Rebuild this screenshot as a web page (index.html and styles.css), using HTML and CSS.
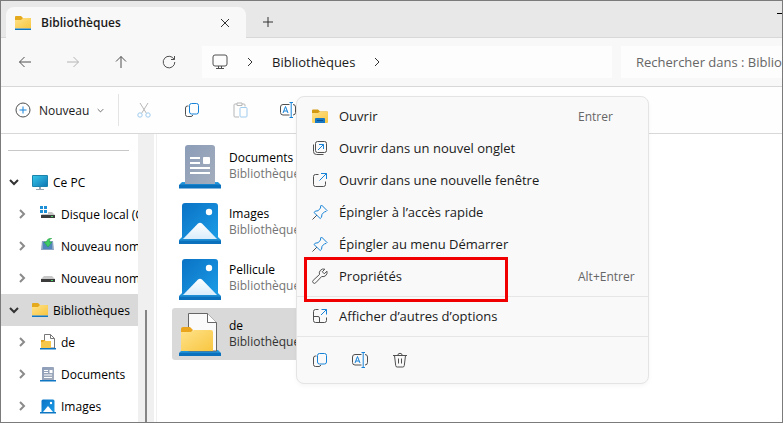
FILE: index.html
```html
<!DOCTYPE html>
<html lang="fr">
<head>
  <meta charset="UTF-8">
  <meta name="viewport" content="width=device-width, initial-scale=1.0">
  <title>Bibliothèques</title>
  <link rel="stylesheet" href="styles.css">
</head>
<body>
  <!-- icons -->
  <svg class="sprite" aria-hidden="true">
    <defs>
      <linearGradient id="gFolder" x1="0" y1="0" x2="1" y2="1">
        <stop offset="0" stop-color="#ffe28a"/><stop offset="1" stop-color="#f8c640"/>
      </linearGradient>
      <linearGradient id="gBlue" x1="0" y1="0" x2="1" y2="1">
        <stop offset="0" stop-color="#0a72c4"/><stop offset="1" stop-color="#1c9ce6"/>
      </linearGradient>
      <linearGradient id="gDoc" x1="0" y1="0" x2="1" y2="1">
        <stop offset="0" stop-color="#8c9db8"/><stop offset="1" stop-color="#a3adbd"/>
      </linearGradient>
      <linearGradient id="gBase" x1="0" y1="0" x2="0" y2="1">
        <stop offset="0" stop-color="#2da5e6"/><stop offset="1" stop-color="#0566b4"/>
      </linearGradient>
      <linearGradient id="gSnow" x1="0" y1="0" x2="0" y2="1">
        <stop offset="0" stop-color="#ffffff"/><stop offset="1" stop-color="#d9edfb"/>
      </linearGradient>
      <linearGradient id="gScreen" x1="0" y1="0" x2="1" y2="1">
        <stop offset="0" stop-color="#35c5e8"/><stop offset="1" stop-color="#1179b5"/>
      </linearGradient>
    </defs>
    <symbol id="folder" viewBox="0 0 16 16">
      <path d="M0 2a1 1 0 0 1 1-1h5l2 2h7a1 1 0 0 1 1 1v9H0z" fill="#e5a91d"/>
      <path d="M0 5h6l2-2h7a1 1 0 0 1 1 1v9.500H0z" fill="url(#gFolder)"/>
      <path d="M0 13.500h16V15H0z" fill="#0f76c4"/>
    </symbol>
    <symbol id="folderOpen" viewBox="0 0 16 16">
      <path d="M0 2.500a1 1 0 0 1 1-1h5l2 2h7a1 1 0 0 1 1 1V14H0z" fill="#d39a12"/>
      <path d="M0 5h6l2-1.500h7a1 1 0 0 1 1 1V14a1 1 0 0 1-1 1H1a1 1 0 0 1-1-1z" fill="url(#gFolder)"/>
      <path d="M3 15v-4a1 1 0 0 1 1-1h8a1 1 0 0 1 1 1v4z" fill="#1677c2"/>
      <path d="M5 12.500h6" stroke="#0b4f8f" stroke-width="1"/>
    </symbol>
    <symbol id="docSmall" viewBox="0 0 16 16">
      <path d="M2 14V2a1 1 0 0 1 1-1h10a1 1 0 0 1 1 1v12z" fill="url(#gDoc)"/>
      <path d="M4 4.500h4M4 6.500h4M4 9h8M4 11.500h8" stroke="#fff"/>
      <path d="M9.500 4h3v3h-3z" fill="#fff"/>
      <path d="M0 14h16v1.500H0z" fill="#0f76c4"/>
    </symbol>
    <symbol id="imgSmall" viewBox="0 0 16 16">
      <path d="M1.500 14V3a1.500 1.500 0 0 1 1.500-1.500h10A1.500 1.500 0 0 1 14.500 3v11z" fill="url(#gBlue)"/>
      <path d="M3 14l5-6 5 6z" fill="#fff"/><circle cx="11" cy="5" r="1.200" fill="#fff"/>
      <path d="M0 14h16v1.500H0z" fill="#0f76c4"/>
    </symbol>
    <symbol id="libSmall" viewBox="0 0 16 16">
      <path d="M4.500 14V.500h6l4 4V14z" fill="#fff" stroke="#777"/>
      <path d="M10.500.500v4h4" fill="none" stroke="#777"/>
      <path d="M1 6h3.500l1 1H11v7H1z" fill="#f7c74c"/><path d="M1 6h3.500l1 1H4L3 8H1z" fill="#e5a11a"/>
      <path d="M0 14h16v1.500H0z" fill="#0f76c4"/>
    </symbol>
    <symbol id="docBig" viewBox="0 0 42 45">
      <path d="M3 38h36l3 3v2H0v-2z" fill="url(#gBase)"/>
      <path d="M6 40V4a3 3 0 0 1 3-3h24a3 3 0 0 1 3 3v36z" fill="url(#gDoc)"/>
      <path d="M11 14h10M11 19h10M11 24h20M11 29h20" stroke="#fff" stroke-width="2"/>
      <rect x="24" y="13" width="7" height="7" rx="1" fill="#fff"/>
      <path d="M0 41h42v3.500H0z" fill="#0c71bd"/>
    </symbol>
    <symbol id="imgBig" viewBox="0 0 42 45">
      <path d="M3 37h36l3 3v4H0v-4z" fill="url(#gBase)"/>
      <path d="M3 38V6a3 3 0 0 1 3-3h30a3 3 0 0 1 3 3v32z" fill="url(#gBlue)"/>
      <path d="M4 39l15-15.500q2-1.500 4 0L38 39z" fill="url(#gSnow)"/>
      <circle cx="30" cy="12" r="3.200" fill="#fff"/>
      <path d="M0 41h42v3H0z" fill="#0c71bd"/>
    </symbol>
    <symbol id="libBig" viewBox="0 0 42 45">
      <path d="M3 38h36l3 3v3H0v-3z" fill="url(#gBase)"/>
      <path d="M9.500 39V1.500h19l9 9V39z" fill="#fafafa" stroke="#666"/>
      <path d="M28.500 1.500v9h9" fill="#fff" stroke="#666"/>
      <path d="M2 17a2 2 0 0 1 2-2h7l3 3-3 4H2z" fill="#eba51d"/>
      <path d="M2 20h10l3-2h17a2 2 0 0 1 2 2v19H2z" fill="url(#gFolder)"/>
      <path d="M0 41h42v3H0z" fill="#0c71bd"/>
    </symbol>
    <symbol id="pc" viewBox="0 0 16 16">
      <rect x="0" y="1" width="16" height="12" rx="1" fill="#1b84ad"/>
      <rect x="1" y="2" width="14" height="10" fill="url(#gScreen)"/>
      <path d="M7 13h2v2h3v1H4v-1h3z" fill="#9aa7b2"/>
    </symbol>
    <symbol id="diskWin" viewBox="0 0 16 16">
      <path d="M0 0h3v3H0zM4 0h3v3H4zM0 4h3v3H0zM4 4h3v3H4z" fill="#1e8fd5"/>
      <path d="M8 6h4l3 3H1l1-1h6z" fill="#c4c4c4"/><path d="M1 9h14v3H1z" fill="#3b3b3b"/><path d="M11 10.500h2" stroke="#4ed86c"/>
    </symbol>
    <symbol id="diskNew" viewBox="0 0 16 16">
      <path d="M2 3h11l1 9H1z" fill="#8ba4c3"/><path d="M3 4h9v7H3z" fill="#5186bd"/>
      <path d="M12 0C9 0 7 1 6.500 4H4l4 5 4-5h-2.500c0-2 .500-3 2.500-4z" fill="#41cc63" stroke="#229a43" stroke-width=".5"/>
    </symbol>
    <symbol id="disk" viewBox="0 0 16 16">
      <path d="M4 6h8l3 3H1z" fill="#c8c8c8"/><path d="M1 9h14v3H1z" fill="#3b3b3b"/><path d="M11 10.500h2" stroke="#4ed86c"/>
    </symbol>
    <symbol id="left" viewBox="0 0 16 16"><path d="M14 8H2.500M7.500 3L2.500 8l5 5"/></symbol>
    <symbol id="right" viewBox="0 0 16 16"><path d="M2 8h11.500M8.500 3l5 5-5 5"/></symbol>
    <symbol id="up" viewBox="0 0 16 16"><path d="M8 14V2.500M3 7.500l5-5 5 5"/></symbol>
    <symbol id="refresh" viewBox="0 0 16 16"><path d="M13.200 5.500A5.800 5.800 0 1 0 13.800 8M13.500 2v3.500H10"/></symbol>
    <symbol id="monitor" viewBox="0 0 16 16"><rect x="1" y="1" width="14" height="11" rx="2"/><path d="M6.500 12v2.500M9.500 12v2.500M4 14.500h8"/></symbol>
    <symbol id="chevR" viewBox="0 0 10 10"><path d="M3 1l4 4-4 4"/></symbol>
    <symbol id="chevD" viewBox="0 0 10 10"><path d="M1 3l4 4 4-4"/></symbol>
    <symbol id="close" viewBox="0 0 10 10"><path d="M1 1l8 8M9 1L1 9"/></symbol>
    <symbol id="plus" viewBox="0 0 10 10"><path d="M5 0v10M0 5h10"/></symbol>
    <symbol id="new" viewBox="0 0 16 16"><circle cx="8" cy="8" r="7"/><path class="accent" d="M8 4.500v7M4.500 8h7"/></symbol>
    <symbol id="cut" viewBox="0 0 16 16"><path d="M4 1l6.500 10.500M12 1L5.500 11.500"/><g class="accent"><circle cx="4" cy="13" r="2.200"/><circle cx="12" cy="13" r="2.200"/></g></symbol>
    <symbol id="copy" viewBox="0 0 16 16"><path d="M4.500 4H3.500a2 2 0 0 0-2 2v6.500a2 2 0 0 0 2 2H7a2 2 0 0 0 1.800-1.500"/><rect class="accent" x="5.500" y="1.500" width="9" height="10.500" rx="2"/></symbol>
    <symbol id="paste" viewBox="0 0 16 16"><path d="M7 15H3a1 1 0 0 1-1-1V3a1 1 0 0 1 1-1h2M10 2h2a1 1 0 0 1 1 1v1.500M5 1h5v2.500H5z"/><rect class="accent" x="8" y="5.500" width="7" height="9.500" rx="1"/></symbol>
    <symbol id="rename" viewBox="0 0 16 16"><path d="M9.500 2.500H3a2.500 2.500 0 0 0-2.500 2.500v5.500A2.500 2.500 0 0 0 3 13h6.500M13 2.500a2.500 2.500 0 0 1 2.500 2.500v5.500A2.500 2.500 0 0 1 13 13"/><path class="accent" d="M3 11l2.500-6.500L8 11M4 9h3M11.200.500v15M9.500.500h3.500M9.500 15.500h3.500"/></symbol>
    <symbol id="newTab" viewBox="0 0 16 16"><rect x="3.500" y="1.500" width="11" height="11" rx="2"/><path d="M1.500 4.500v7a3 3 0 0 0 3 3h7"/><path class="accent" d="M6 10l5.500-5.500M7 4.500h4.500V9"/></symbol>
    <symbol id="newWin" viewBox="0 0 16 16"><path d="M6.500 2.500h-3a2 2 0 0 0-2 2v8a2 2 0 0 0 2 2h8a2 2 0 0 0 2-2v-3"/><path class="accent" d="M7.500 8.500l7-7M9 1.500h5.500V7"/></symbol>
    <symbol id="pin" viewBox="0 0 16 16"><path d="M5 11L.500 15.500"/><path class="accent" d="M9.500 1l5.500 5.500-1 1-1.500.300-2.500 2.500-.500 3-1.300 1.200L2 8.500l1.200-1.300 3-.500L8.500 4l.200-2z"/></symbol>
    <symbol id="wrench" viewBox="0 0 16 16"><path d="M12.800 1.200a4.200 4.200 0 0 0-5.300 5.300L1.200 12.300a1.600 1.600 0 0 0 2.500 2.500l6-6.300a4.200 4.200 0 0 0 5.200-5.300L12.300 5.800l-2-2z"/></symbol>
    <symbol id="more" viewBox="0 0 16 16"><path d="M6.500 1.500h-3a2 2 0 0 0-2 2v9a2 2 0 0 0 2 2h9a2 2 0 0 0 2-2v-3M1.500 8.500H6a1.500 1.500 0 0 1 1.500 1.500v4.500"/><path class="accent" d="M9 7l5.500-5.500M9.500 1.500h5V6.500"/></symbol>
    <symbol id="trash" viewBox="0 0 16 16"><path d="M1 3.500h14M5.800 3.500a2.200 2.200 0 0 1 4.400 0M2.500 3.500l1.200 10a1.500 1.500 0 0 0 1.500 1.500h5.600a1.500 1.500 0 0 0 1.500-1.500l1.200-10M6.500 6.500v5M9.500 6.500v5"/></symbol>
  </svg>

  <div class="window">
    <header class="titleBar">
      <div class="tab">
        <svg class="icon color"><use href="#folder"/></svg>
        <span class="tabTitle">Bibliothèques</span>
        <button class="tabClose" aria-label="Fermer l'onglet"><svg class="glyph"><use href="#close"/></svg></button>
      </div>
      <button class="tabNew" aria-label="Nouvel onglet"><svg class="glyph"><use href="#plus"/></svg></button>
      <button class="minimize" aria-label="Réduire"></button>
    </header>

    <nav class="navBar">
      <div class="navButtons">
        <button aria-label="Précédent"><svg class="icon"><use href="#left"/></svg></button>
        <button aria-label="Suivant" class="off" disabled><svg class="icon"><use href="#right"/></svg></button>
        <button aria-label="Dossier parent"><svg class="icon"><use href="#up"/></svg></button>
        <button aria-label="Actualiser"><svg class="icon"><use href="#refresh"/></svg></button>
      </div>
      <div class="address">
        <svg class="icon"><use href="#monitor"/></svg>
        <svg class="glyph"><use href="#chevR"/></svg>
        <a href="#">Bibliothèques</a>
        <svg class="glyph"><use href="#chevR"/></svg>
      </div>
      <input class="search" type="text" aria-label="Rechercher" placeholder="Rechercher dans : Biblio">
    </nav>

    <div class="toolBar">
      <button class="newBtn">
        <svg class="icon"><use href="#new"/></svg>
        Nouveau
        <svg class="glyph small"><use href="#chevD"/></svg>
      </button>
      <div class="tools">
        <button class="off" aria-label="Couper" disabled><svg class="icon"><use href="#cut"/></svg></button>
        <button aria-label="Copier"><svg class="icon"><use href="#copy"/></svg></button>
        <button class="off" aria-label="Coller" disabled><svg class="icon"><use href="#paste"/></svg></button>
        <button aria-label="Renommer"><svg class="icon"><use href="#rename"/></svg></button>
      </div>
    </div>

    <main class="content">
      <aside class="sidebar">
        <ul class="tree">
          <li class="node"><svg class="glyph"><use href="#chevD"/></svg><svg class="icon color"><use href="#pc"/></svg><a href="#">Ce PC</a></li>
          <li class="node child"><svg class="glyph"><use href="#chevR"/></svg><svg class="icon color"><use href="#diskWin"/></svg><a href="#">Disque local (C</a></li>
          <li class="node child"><svg class="glyph"><use href="#chevR"/></svg><svg class="icon color"><use href="#diskNew"/></svg><a href="#">Nouveau nom</a></li>
          <li class="node child"><svg class="glyph"><use href="#chevR"/></svg><svg class="icon color"><use href="#disk"/></svg><a href="#">Nouveau nom</a></li>
          <li class="node selected"><svg class="glyph"><use href="#chevD"/></svg><svg class="icon color"><use href="#folder"/></svg><a href="#">Bibliothèques</a></li>
          <li class="node child"><svg class="glyph"><use href="#chevR"/></svg><svg class="icon color"><use href="#libSmall"/></svg><a href="#">de</a></li>
          <li class="node child"><svg class="glyph"><use href="#chevR"/></svg><svg class="icon color"><use href="#docSmall"/></svg><a href="#">Documents</a></li>
          <li class="node child"><svg class="glyph"><use href="#chevR"/></svg><svg class="icon color"><use href="#imgSmall"/></svg><a href="#">Images</a></li>
        </ul>
        <div class="scrollbar"><div class="thumb"></div></div>
      </aside>

      <ul class="files">
        <li class="file"><svg class="fileIcon"><use href="#docBig"/></svg><div>Documents<p>Bibliothèque</p></div></li>
        <li class="file"><svg class="fileIcon"><use href="#imgBig"/></svg><div>Images<p>Bibliothèque</p></div></li>
        <li class="file"><svg class="fileIcon"><use href="#imgBig"/></svg><div>Pellicule<p>Bibliothèque</p></div></li>
        <li class="file selected"><svg class="fileIcon"><use href="#libBig"/></svg><div>de<p>Bibliothèque</p></div></li>
      </ul>
    </main>

    <div class="menu">
      <div class="menuList">
        <button class="menuItem"><svg class="icon color"><use href="#folderOpen"/></svg><span>Ouvrir</span><kbd>Entrer</kbd></button>
        <button class="menuItem"><svg class="icon"><use href="#newTab"/></svg><span>Ouvrir dans un nouvel onglet</span></button>
        <button class="menuItem"><svg class="icon"><use href="#newWin"/></svg><span>Ouvrir dans une nouvelle fenêtre</span></button>
        <button class="menuItem"><svg class="icon"><use href="#pin"/></svg><span>Épingler à l’accès rapide</span></button>
        <button class="menuItem"><svg class="icon"><use href="#pin"/></svg><span>Épingler au menu Démarrer</span></button>
        <button class="menuItem marked"><svg class="icon"><use href="#wrench"/></svg><span>Propriétés</span><kbd>Alt+Entrer</kbd></button>
      </div>
      <div class="menuList">
        <button class="menuItem"><svg class="icon"><use href="#more"/></svg><span>Afficher d’autres d’options</span></button>
      </div>
      <div class="menuActions">
        <button aria-label="Copier"><svg class="icon"><use href="#copy"/></svg></button>
        <button aria-label="Renommer"><svg class="icon"><use href="#rename"/></svg></button>
        <button aria-label="Supprimer"><svg class="icon"><use href="#trash"/></svg></button>
      </div>
    </div>
  </div>
</body>
</html>
```
FILE: styles.css
```css
* {
  box-sizing: border-box;
}
body {
  margin: 0;
  font-family: "Open Sans", "Noto Sans", sans-serif;
  font-size: 12px;
  color: #1b1b1b;
}
ul, p {
  margin: 0;
  padding: 0;
  list-style: none;
}
a {
  color: inherit;
  text-decoration: none;
}
button {
  display: flex;
  align-items: center;
  justify-content: center;
  padding: 0;
  border: none;
  background: none;
  font: inherit;
  color: inherit;
}

/* icons */
.sprite {
  position: absolute;
  width: 0;
  height: 0;
}
.icon {
  flex: none;
  width: 16px;
  height: 16px;
  fill: none;
  stroke: #505050;
}
.glyph {
  flex: none;
  width: 10px;
  height: 10px;
  fill: none;
  stroke: #333;
}
.glyph.small {
  width: 7px;
  height: 7px;
}
.color {
  stroke: none;
}
.accent {
  stroke: #1683d8;
}
.off {
  opacity: 0.4;
}

.window {
  position: relative;
  display: flex;
  flex-direction: column;
  height: 100vh;
  overflow: hidden;
  border: 1px solid #7b7b7b;
  background-color: #fff;
}

/* tabs */
.titleBar {
  display: flex;
  height: 37px;
  padding: 6px 0 0 5px;
  background-color: #e8e8e8;
  border-bottom: 1px solid #d8d8d8;
}
.tab {
  display: flex;
  align-items: center;
  gap: 10px;
  width: 240px;
  height: 31px;
  padding: 0 16px 0 9px;
  border-radius: 8px 8px 0 0;
  background-color: #f8f8f8;
}
.tabTitle {
  flex: 1;
  font-weight: 600;
}
.tabNew {
  width: 44px;
}
.minimize {
  width: 5px;
  height: 1px;
  margin: 6px 0 0 auto;
  background-color: #000;
}

/* navigation */
.navBar {
  display: flex;
  align-items: center;
  gap: 9px;
  height: 49px;
  padding-left: 16px;
  background-color: #f8f8f8;
  border-bottom: 1px solid #d8d8d8;
  font-size: 13px;
}
.navButtons {
  display: flex;
  gap: 32px;
  margin-right: 16px;
}
.address {
  display: flex;
  flex: 1;
  align-items: center;
  gap: 17px;
  height: 32px;
  padding-left: 10px;
  background-color: #fdfdfd;
}
.search {
  width: 161px;
  height: 32px;
  padding: 0 0 0 15px;
  border: none;
  background-color: #fdfdfd;
  font: inherit;
}
.search::placeholder {
  color: #666;
}

/* commands */
.toolBar {
  display: flex;
  align-items: center;
  height: 47px;
  padding-left: 14px;
  background-color: #fefefe;
  border-bottom: 1px solid #d8d8d8;
}
.newBtn {
  gap: 8px;
  height: 32px;
  padding-right: 14px;
  border-right: 1px solid #e4e4e4;
}
.tools {
  display: flex;
  gap: 32px;
  padding-left: 17px;
}

/* content */
.content {
  display: flex;
  flex: 1;
  min-height: 0;
}
.sidebar {
  display: flex;
  width: 153px;
  overflow: hidden;
}
.tree {
  flex: 1;
  overflow: hidden;
}
.tree::before {
  content: "";
  display: block;
  margin: 16px 9px 15px 7px;
  border-top: 1px solid #c8c8c8;
}
.node {
  display: flex;
  align-items: center;
  height: 32px;
  padding-left: 8px;
  color: #000;
  white-space: nowrap;
}
.node .glyph {
  margin-right: 13px;
  stroke-width: 2px;
}
.node .icon {
  margin-right: 5px;
}
.child {
  padding-left: 16px;
}
.child .glyph {
  stroke: #8a8a8a;
}
.selected {
  background-color: #d9d9d9;
}
.scrollbar {
  width: 16px;
  padding: 176px 7px 0;
  background-color: #f0f0f0;
}
.thumb {
  width: 2px;
  height: 100%;
  background-color: #858585;
}
.files {
  display: flex;
  flex: 1;
  flex-direction: column;
  gap: 4px;
  margin-left: 2px;
  padding: 6px 0 0 15px;
  border-left: 1px solid #f0f0f0;
}
.file {
  display: flex;
  align-items: center;
  gap: 8px;
  width: 250px;
  height: 52px;
  padding-left: 7px;
  border-radius: 3px;
  line-height: 16px;
  color: #000;
}
.file p {
  color: #747474;
}
.file.selected p {
  color: #333;
}
.fileIcon {
  width: 42px;
  height: 45px;
}

/* context menu */
.menu {
  position: absolute;
  top: 95px;
  left: 295px;
  width: 353px;
  border: 1px solid #e4e4e4;
  border-radius: 8px;
  background-color: #f9f9f9;
  box-shadow: 0 2px 4px rgba(0, 0, 0, 0.04);
  font-size: 13px;
}
.menuList {
  padding: 3px 0 4px;
  border-bottom: 1px solid #e6e6e6;
}
.menuItem {
  position: relative;
  justify-content: flex-start;
  gap: 11px;
  width: 100%;
  height: 32px;
  padding-left: 15px;
}
.menuItem span {
  flex: 1;
  text-align: left;
}
.menuItem kbd {
  width: 70px;
  font-family: inherit;
  font-size: 12px;
  color: #666;
  text-align: left;
}
/* red frame around the entry to click */
.marked::after {
  content: "";
  position: absolute;
  top: -3px;
  left: 7px;
  width: 198px;
  height: 39px;
  border: 3px solid #f00000;
}
.menuActions {
  display: flex;
  gap: 24px;
  padding: 15px;
}
```
